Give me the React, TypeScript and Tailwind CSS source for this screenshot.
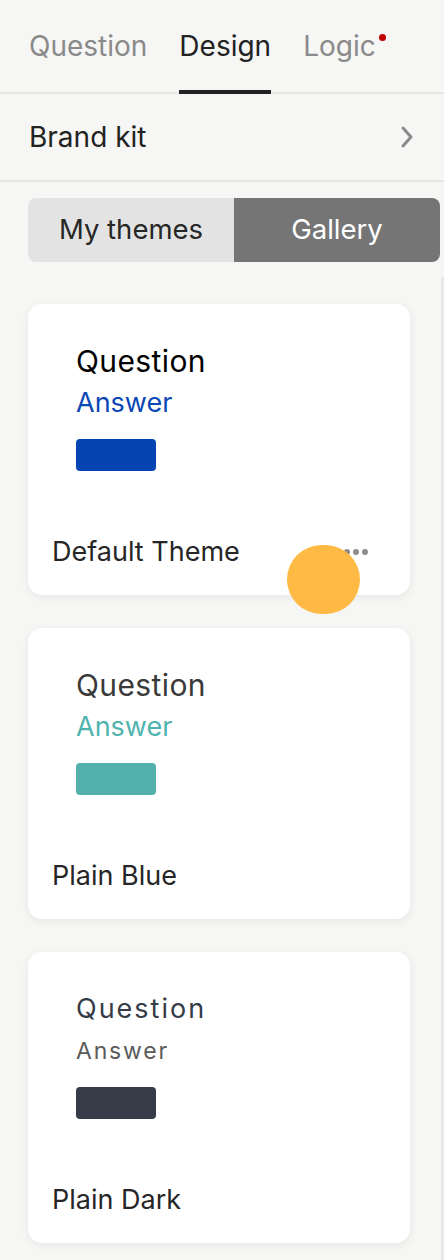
const themes = [
  {
    name: "Default Theme",
    question: "text-black text-[30px] leading-[34px] tracking-[0.4px]",
    answer: "text-[#0a47b5] text-[27px] leading-[32px]",
    swatch: "bg-[#0645b1]",
    menu: true,
  },
  {
    name: "Plain Blue",
    question: "text-[#3a3a3a] text-[30px] leading-[34px] tracking-[0.4px]",
    answer: "text-[#4fb3ae] text-[27px] leading-[32px]",
    swatch: "bg-[#52b0ad]",
    menu: false,
  },
  {
    name: "Plain Dark",
    question: "text-[#353b47] text-[27px] leading-[34px] tracking-[2px]",
    answer: "text-[#5a5a5a] text-[23px] leading-[32px] tracking-[1.8px]",
    swatch: "bg-[#363c48]",
    menu: false,
  },
];

function ThemeCard({ t }: { t: (typeof themes)[number] }) {
  return (
    <div className="relative h-[291px] rounded-[14px] bg-white shadow-[0_2px_8px_rgba(0,0,0,0.07)] flex flex-col">
      <div className="pl-[48px] pt-[40px] flex flex-col">
        <div className={t.question}>Question</div>
        <div className={"mt-[9px] " + t.answer}>Answer</div>
        <div className={"mt-[20px] w-[80px] h-[32px] rounded-[4px] " + t.swatch}></div>
      </div>
      <div className="mt-auto pl-[24px] pr-[42px] pb-[27px] flex items-center justify-between">
        <span className="text-[27px] leading-[32px] text-[#262626]">{t.name}</span>
        {t.menu && (
          <div className="flex gap-[3px]">
            <span className="w-[6px] h-[6px] rounded-full bg-[#8c8c8c]"></span>
            <span className="w-[6px] h-[6px] rounded-full bg-[#8c8c8c]"></span>
            <span className="w-[6px] h-[6px] rounded-full bg-[#8c8c8c]"></span>
          </div>
        )}
      </div>
      {t.menu && (
        <div className="absolute left-[259px] top-[241px] w-[73px] h-[69px] rounded-full bg-[#ffb63b]/95"></div>
      )}
    </div>
  );
}

export default function App() {
  return (
    <div className="w-[444px] h-[1260px] overflow-hidden bg-[#f6f6f4] flex flex-col" style={{ fontFamily: "Inter, 'Noto Sans', sans-serif" }}>
      {/* tabs */}
      <div className="flex gap-[32px] pl-[29px] border-b-2 border-[#e6e6e4] text-[28px]">
        <div className="h-[94px] -mb-[2px] pt-[2px] border-b-4 border-transparent flex items-center text-[#8a8a8a]">Question</div>
        <div className="h-[94px] -mb-[2px] pt-[2px] border-b-4 border-[#222] flex items-center text-[#222]">Design</div>
        <div className="h-[94px] -mb-[2px] pt-[2px] border-b-4 border-transparent flex items-center text-[#8a8a8a] relative">
          Logic
          <span className="absolute -right-[10px] top-[34px] w-[7px] h-[7px] rounded-full bg-[#c00000]"></span>
        </div>
      </div>

      {/* brand kit */}
      <div className="h-[88px] flex items-center justify-between pl-[29px] pr-[30px] border-b-2 border-[#e6e6e4]">
        <span className="text-[28px] text-[#222]">Brand kit</span>
        <svg width="14" height="24" viewBox="0 0 14 24" fill="none">
          <path d="M3 3l8 9-8 9" stroke="#8a8a8a" strokeWidth="3" strokeLinecap="round" strokeLinejoin="round" />
        </svg>
      </div>

      {/* segmented */}
      <div className="mt-[16px] ml-[28px] mr-[4px] h-[64px] flex rounded-[8px] overflow-hidden text-[27.5px]">
        <div className="w-[206px] bg-[#e3e3e3] text-[#262626] flex items-center justify-center">My themes</div>
        <div className="flex-1 bg-[#757575] text-white flex items-center justify-center">Gallery</div>
      </div>

      {/* cards */}
      <div className="mt-[15px] flex-1 flex">
        <div className="flex-1 pl-[28px] pr-[31px] pt-[27px] flex flex-col gap-[33px]">
          {themes.map((t) => (
            <ThemeCard key={t.name} t={t} />
          ))}
        </div>
        <div className="w-[3px] bg-[#e9e9e7]"></div>
      </div>
    </div>
  );
}
